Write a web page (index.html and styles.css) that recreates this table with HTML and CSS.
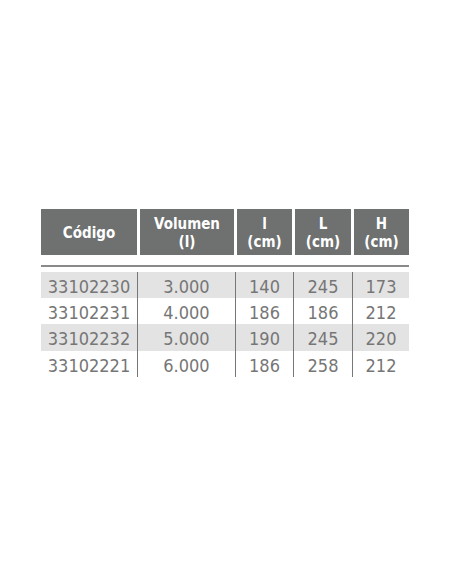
FILE: index.html
```html
<!DOCTYPE html>
<html>
<head>
<meta charset="utf-8">
<link rel="stylesheet" href="styles.css">
</head>
<body>
<div class="spec">
  <div class="head">
    <div class="hc">Código</div>
    <div class="hc">Volumen<br>(l)</div>
    <div class="hc">l<br>(cm)</div>
    <div class="hc">L<br>(cm)</div>
    <div class="hc">H<br>(cm)</div>
  </div>
  <div class="rule"></div>
  <div class="body">
    <div class="row alt"><div class="c">33102230</div><div class="c">3.000</div><div class="c">140</div><div class="c">245</div><div class="c">173</div></div>
    <div class="row"><div class="c">33102231</div><div class="c">4.000</div><div class="c">186</div><div class="c">186</div><div class="c">212</div></div>
    <div class="row alt"><div class="c">33102232</div><div class="c">5.000</div><div class="c">190</div><div class="c">245</div><div class="c">220</div></div>
    <div class="row"><div class="c">33102221</div><div class="c">6.000</div><div class="c">186</div><div class="c">258</div><div class="c">212</div></div>
  </div>
</div>
</body>
</html>
```
FILE: styles.css
```css
html, body {
  margin: 0;
  padding: 0;
  background: #ffffff;
}
body {
  font-family: "DejaVu Sans Condensed", "Liberation Sans", sans-serif;
}
.spec {
  width: 368px;
  margin: 209px 0 0 41px;
}
.head {
  display: grid;
  grid-template-columns: 96px 94px 55px 56px 55px;
  column-gap: 3px;
}
.hc {
  height: 46px;
  padding-top: 2px;
  box-sizing: border-box;
  background: #6e7170;
  color: #ffffff;
  font-weight: bold;
  font-size: 15px;
  line-height: 18px;
  display: flex;
  align-items: center;
  justify-content: center;
  text-align: center;
}
.rule {
  height: 2px;
  background: #8a8a8a;
  margin-top: 10px;
}
.body {
  margin-top: 5px;
}
.row {
  display: grid;
  grid-template-columns: 96px 98px 58px 59px 57px;
  height: 26px;
}
.row:nth-child(3) {
  height: 27px;
}
.row.alt {
  background: #e3e3e3;
}
.c {
  font-size: 18px;
  line-height: 22px;
  padding-top: 4px;
  color: #767676;
  text-align: center;
  border-left: 1px solid #777777;
}
.c:first-child {
  border-left: none;
}
```
